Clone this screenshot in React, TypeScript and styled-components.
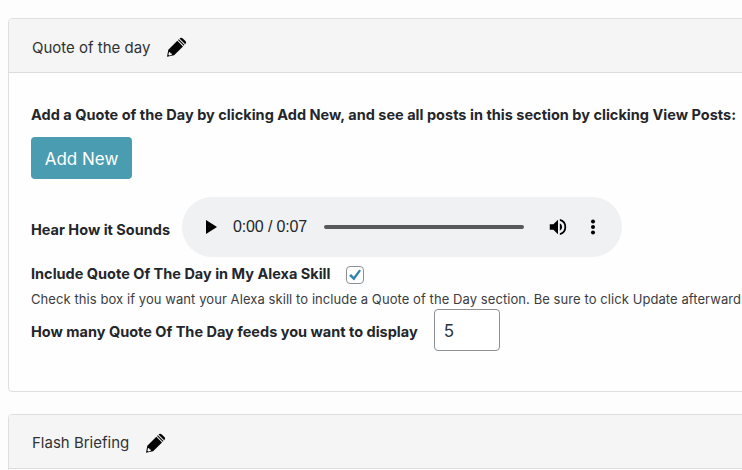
import React from "react";
import styled, { createGlobalStyle } from "styled-components";

const GlobalStyle = createGlobalStyle`
  * { box-sizing: border-box; }
  body {
    margin: 0;
    background: #fdfdfd;
    color: #23262a;
    font-family: Inter, "Liberation Sans", sans-serif;
    overflow: hidden;
  }
`;

const Page = styled.main`
  height: 470px;
  overflow: hidden;
  padding: 18px 0 0 8px;
  display: flex;
  flex-direction: column;
  gap: 22px;
`;

const Card = styled.section<{ $height: number }>`
  flex: none;
  width: 760px;
  height: ${(p) => p.$height}px;
  border: 1.5px solid #dfdfdf;
  border-radius: 4px;
  background: #fefefe;
  overflow: hidden;
`;

const CardHeader = styled.header`
  display: flex;
  align-items: center;
  gap: 16px;
  height: 54px;
  padding: 3px 0 0 23px;
  border-bottom: 1px solid #dcdcdc;
  background: #f5f5f5;
`;

const Title = styled.h2<{ $drop?: number }>`
  margin: 0;
  padding-top: ${(p) => p.$drop ?? 0}px;
  font-size: 15px;
  font-weight: 400;
  line-height: 22px;
  color: #303234;
`;

const CardBody = styled.div`
  display: flex;
  flex-direction: column;
  align-items: flex-start;
  padding: 31px 0 0 22px;
  white-space: nowrap;
`;

const Label = styled.label<{ $drop?: number; $spacing?: number }>`
  padding-top: ${(p) => p.$drop ?? 0}px;
  font-size: 14.5px;
  font-weight: 700;
  line-height: 22px;
  letter-spacing: ${(p) => p.$spacing ?? 0}px;
`;

const AddButton = styled.button`
  width: 101px;
  height: 42px;
  margin-top: 11px;
  padding: 2px 0 0;
  border: 0;
  border-radius: 4px;
  background: #4a9cb0;
  color: #fff;
  font: 400 17px/40px Inter, sans-serif;
`;

const Row = styled.div<{ $height: number; $gap: number; $top?: number }>`
  display: flex;
  align-items: center;
  gap: ${(p) => p.$gap}px;
  height: ${(p) => p.$height}px;
  margin-top: ${(p) => p.$top ?? 0}px;
`;

const Player = styled.div`
  display: flex;
  align-items: center;
  width: 440px;
  height: 60px;
  padding-left: 24px;
  border-radius: 30px;
  background: #f0f1f3;
`;

const Time = styled.span`
  width: 74px;
  margin-left: 16px;
  font: 400 16px/20px "Liberation Sans", sans-serif;
  letter-spacing: -0.15px;
`;

const Track = styled.div`
  width: 200px;
  height: 4px;
  margin: 0 23px 0 17px;
  border-radius: 2px;
  background: #58595a;
`;

const Actions = styled.div`
  display: flex;
  align-items: center;
  gap: 12px;
`;

const Checkbox = styled.span`
  display: flex;
  align-items: center;
  justify-content: center;
  width: 18px;
  height: 18px;
  margin-top: 2px;
  border: 1px solid #8b9097;
  border-radius: 4px;
  background: #fff;
`;

const Hint = styled.p`
  margin: 4px 0 0;
  font-size: 13px;
  line-height: 20px;
  letter-spacing: 0.075px;
  color: #3a3d41;
`;

const NumberInput = styled.input`
  width: 66px;
  height: 42px;
  padding: 2px 9px 0;
  border: 1px solid #8c8f94;
  border-radius: 4px;
  background: #fff;
  color: #2c3338;
  font: 400 17px/38px Inter, sans-serif;
`;

const Pencil = () => (
  <svg width="21" height="21" viewBox="0 0 21 21" fill="#050505">
    <path
      fillRule="evenodd"
      d="M1 19.8 2.3 12.7 11.3 3.7 17 9.4 8.1 18.3ZM2.9 15.2 2.4 17.8 3.2 18.6 5.8 18.1 5.7 16.5 4.3 16.3 4.2 15Z"
    />
    <path d="M12 3 12.8 2.2 18.5 7.9 17.7 8.7ZM13.5 1.5C14.5.5 15.8.6 16.8 1.5L19.4 4.1C20.4 5.1 20.4 6 19.2 7.2Z" />
  </svg>
);

const PlayIcon = () => (
  <svg width="11" height="14" viewBox="0 0 11 14">
    <path d="M0 0v14l11-7z" />
  </svg>
);

const VolumeIcon = () => (
  <svg width="22" height="22" viewBox="0 0 24 24">
    <path d="M3 9v6h4l5 5V4L7 9H3zm13.5 3A4.5 4.5 0 0 0 14 7.97v8.05A4.5 4.5 0 0 0 16.5 12zM14 3.23v2.06a7 7 0 0 1 0 13.42v2.06a9 9 0 0 0 0-17.54z" />
  </svg>
);

const MoreIcon = () => (
  <svg width="24" height="24" viewBox="0 0 24 24">
    <circle cx="12" cy="6.5" r="2" />
    <circle cx="12" cy="12" r="2" />
    <circle cx="12" cy="17.5" r="2" />
  </svg>
);

const CheckIcon = () => (
  <svg width="16" height="16" viewBox="0 0 16 16" fill="#3582b2">
    <path d="M2.1 8.7 4.1 7.1 6.7 9.8 12.2 2.6 14 3.7 7 13.5Z" />
  </svg>
);

export default function App() {
  return (
    <>
      <GlobalStyle />
      <Page>
        <Card $height={374}>
          <CardHeader>
            <Title $drop={2}>Quote of the day</Title>
            <Pencil />
          </CardHeader>
          <CardBody>
            <Label as="strong" $spacing={0.015}>
              Add a Quote of the Day by clicking Add New, and see all posts in this section by clicking View Posts:
            </Label>
            <AddButton>Add New</AddButton>
            <Row $height={60} $gap={12} $top={18}>
              <Label as="span" $drop={5}>
                Hear How it Sounds
              </Label>
              <Player>
                <PlayIcon />
                <Time>0:00 / 0:07</Time>
                <Track />
                <Actions>
                  <VolumeIcon />
                  <MoreIcon />
                </Actions>
              </Player>
            </Row>
            <Row $height={22} $gap={16} $top={6}>
              <Label>Include Quote Of The Day in My Alexa Skill</Label>
              <Checkbox role="checkbox" aria-checked="true">
                <CheckIcon />
              </Checkbox>
            </Row>
            <Hint>
              Check this box if you want your Alexa skill to include a Quote of the Day section. Be sure to click Update afterward
            </Hint>
            <Row $height={42} $gap={16}>
              <Label $drop={3}>How many Quote Of The Day feeds you want to display</Label>
              <NumberInput defaultValue="5" />
            </Row>
          </CardBody>
        </Card>
        <Card $height={100}>
          <CardHeader>
            <Title>Flash Briefing</Title>
            <Pencil />
          </CardHeader>
        </Card>
      </Page>
    </>
  );
}
